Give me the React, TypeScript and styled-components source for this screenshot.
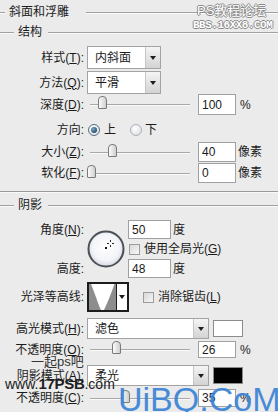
import styled, { createGlobalStyle } from "styled-components";

const GlobalStyle = createGlobalStyle`
  html, body {
    margin: 0;
    padding: 0;
    background: #ebebeb;
  }
`;

const FONT = `"Liberation Sans", "Noto Sans CJK SC", sans-serif`;

const Panel = styled.div`
  position: relative;
  width: 278px;
  height: 412px;
  overflow: hidden;
  background: #ebebeb;
  color: #1b1b1b;
  font-family: ${FONT};
  font-size: 12px;
  line-height: 14px;
`;

const HeaderRow = styled.div<{ $h: number; $mt?: number }>`
  display: flex;
  align-items: center;
  height: ${(p) => p.$h}px;
  margin-top: ${(p) => p.$mt ?? 0}px;
`;

const Rule = styled.span<{ $w?: number }>`
  height: 1px;
  background: #a0a0a0;
  box-shadow: 0 1px 0 #fafafa;
  ${(p) => (p.$w ? `width: ${p.$w}px; flex: none;` : `flex: 1;`)}
`;

const HeaderText = styled.span<{ $ml: number; $mr: number }>`
  margin: 0 ${(p) => p.$mr}px 0 ${(p) => p.$ml}px;
  white-space: nowrap;
`;

const Divider = styled.div`
  margin-top: 8px;
  height: 1px;
  background: #9a9a9a;
  box-shadow: 0 1px 0 #fafafa;
`;

const Row = styled.div<{ $mt: number; $h: number }>`
  display: flex;
  align-items: center;
  height: ${(p) => p.$h}px;
  margin-top: ${(p) => p.$mt}px;
`;

const Label = styled.span`
  width: 87px;
  flex: none;
  box-sizing: border-box;
  padding-right: 3px;
  text-align: right;
  white-space: nowrap;
  align-self: center;
`;

const Select = styled.div<{ $w: number }>`
  width: ${(p) => p.$w}px;
  height: 100%;
  box-sizing: border-box;
  display: flex;
  border: 1px solid #a3a3a3;
  background: #fff;
`;

const SelectValue = styled.span`
  flex: 1;
  padding-left: 7px;
  display: flex;
  align-items: center;
`;

const SelectButton = styled.span`
  width: 14px;
  flex: none;
  border-left: 1px solid #c6c6c6;
  background: linear-gradient(#f5f5f5, #d3d3d3);
  display: flex;
  align-items: center;
  justify-content: center;
  &::after {
    content: "";
    border-left: 3px solid transparent;
    border-right: 3px solid transparent;
    border-top: 4px solid #1e1e1e;
  }
`;

const Track = styled.div`
  position: relative;
  width: 100px;
  height: 1px;
  margin-left: 3px;
  background: #a8a8a8;
  box-shadow: 0 1px 0 #fafafa;
`;

const Thumb = styled.span`
  position: absolute;
  top: -8px;
  width: 9px;
  height: 13px;
  margin-left: -4px;
  box-sizing: border-box;
  border: 1px solid #7a7a7a;
  border-radius: 4px 4px 1px 1px;
  background: linear-gradient(90deg, #fbfbfb, #cfcfcf);
`;

const NumBox = styled.div<{ $w?: number; $ml?: number }>`
  width: ${(p) => p.$w ?? 38}px;
  height: 100%;
  margin-left: ${(p) => p.$ml ?? 8}px;
  box-sizing: border-box;
  border: 1px solid #a0a0a0;
  background: #fff;
  padding-left: 3px;
  display: flex;
  align-items: center;
`;

const Unit = styled.span<{ $ml: number }>`
  margin-left: ${(p) => p.$ml}px;
  white-space: nowrap;
`;

const Radio = styled.span<{ $on?: boolean; $ml: number }>`
  width: 12px;
  height: 12px;
  flex: none;
  margin-left: ${(p) => p.$ml}px;
  box-sizing: border-box;
  border-radius: 50%;
  border: 1px solid ${(p) => (p.$on ? "#5a6d80" : "#aab0b6")};
  background: radial-gradient(circle at 40% 35%, #ffffff, #d5dae0);
  display: flex;
  align-items: center;
  justify-content: center;
  &::after {
    content: "";
    width: 6px;
    height: 6px;
    border-radius: 50%;
    background: ${(p) =>
      p.$on ? "radial-gradient(circle at 35% 35%, #7aa8c8, #0c2c48)" : "transparent"};
  }
`;

const Check = styled.span<{ $ml: number }>`
  width: 11px;
  height: 11px;
  flex: none;
  margin-left: ${(p) => p.$ml}px;
  box-sizing: border-box;
  border: 1px solid #9c9c9c;
  background: linear-gradient(135deg, #d8d8d8, #f7f7f7);
`;

const OptionText = styled.span<{ $ml: number }>`
  margin-left: ${(p) => p.$ml}px;
  white-space: nowrap;
`;

const AngleGrid = styled.div`
  display: grid;
  grid-template-columns: 87px 41px 1fr;
  grid-template-rows: 19px 20px 19px;
  margin-top: 7px;
`;

const Cell = styled.div<{ $row: string; $col: number }>`
  grid-row: ${(p) => p.$row};
  grid-column: ${(p) => p.$col};
  display: flex;
  align-items: center;
`;

const ContourBox = styled.div`
  width: 42px;
  height: 30px;
  box-sizing: border-box;
  border: 2px solid #1c1c1c;
  background: #fff;
  display: flex;
`;

const ContourArrow = styled.span`
  flex: 1;
  border-left: 1px solid #1c1c1c;
  display: flex;
  align-items: center;
  justify-content: center;
  &::after {
    content: "";
    border-left: 3px solid transparent;
    border-right: 3px solid transparent;
    border-top: 4px solid #1c1c1c;
  }
`;

const Swatch = styled.span<{ $color: string }>`
  width: 30px;
  height: 17px;
  margin-left: 4px;
  box-sizing: border-box;
  border: 1px solid #8c8c8c;
  background: ${(p) => p.$color};
`;

const MarkForum = styled.div`
  position: absolute;
  left: 193px;
  top: 3px;
  color: #fff;
  text-shadow: 1px 0 #8a8a8a, -1px 0 #8a8a8a, 0 1px #8a8a8a, 0 -1px #8a8a8a;
  line-height: 15px;
`;

const MarkForumName = styled.div`
  padding-left: 4px;
  font-size: 13px;
`;

const MarkForumUrl = styled.div`
  font-family: "Liberation Mono", monospace;
  font-size: 11px;
  font-weight: bold;
  letter-spacing: -0.5px;
`;

const MarkPs = styled.div`
  position: absolute;
  left: 31px;
  top: 355px;
  font-size: 13px;
  color: #353535;
`;

const MarkPsUrl = styled.div`
  position: absolute;
  left: 5px;
  top: 375px;
  color: #202020;
  font-family: "Liberation Sans", sans-serif;
  font-size: 14px;
  line-height: 18px;
  white-space: nowrap;
  b {
    font-size: 15px;
    letter-spacing: -0.3px;
  }
`;

const MarkBig = styled.div`
  position: absolute;
  left: 118px;
  top: 382px;
  font-family: "Liberation Sans", sans-serif;
  font-size: 34px;
  line-height: 34px;
  color: #3a83d6;
  opacity: 0.92;
  white-space: nowrap;
`;

const Slider: React.FC<{ pct: number }> = ({ pct }) => (
  <Track>
    <Thumb style={{ left: `${pct}%` }} />
  </Track>
);

const Dial = () => (
  <svg width="38" height="38" viewBox="0 0 38 38">
    <defs>
      <radialGradient id="dialFill" cx="50%" cy="45%" r="55%">
        <stop offset="0%" stopColor="#ffffff" />
        <stop offset="70%" stopColor="#f3f4f9" />
        <stop offset="100%" stopColor="#d6d9e2" />
      </radialGradient>
    </defs>
    <circle cx="19" cy="19" r="17.5" fill="url(#dialFill)" stroke="#4b5057" strokeWidth="2" />
    <rect x="18" y="17" width="2" height="2" fill="#111" />
    <g stroke="#2a2a2a" strokeWidth="1">
      <line x1="23.5" y1="10" x2="23.5" y2="12" />
      <line x1="23.5" y1="15" x2="23.5" y2="17" />
      <line x1="20" y1="13.5" x2="22" y2="13.5" />
      <line x1="25" y1="13.5" x2="27" y2="13.5" />
    </g>
  </svg>
);

const ContourPreview = () => (
  <svg width="27" height="26" viewBox="0 0 27 26">
    <rect width="27" height="26" fill="#8d8d8d" />
    <path d="M2 0 C 6 10, 10 22, 12 26 L 15 26 C 18 20, 22 10, 25.5 0 Z" fill="#fff" />
  </svg>
);

export default function App() {
  return (
    <>
      <GlobalStyle />
      <Panel>
        <HeaderRow $h={24}>
          <Rule $w={5} />
          <HeaderText $ml={4} $mr={17}>斜面和浮雕</HeaderText>
          <Rule />
        </HeaderRow>
        <HeaderRow $h={16}>
          <Rule $w={14} />
          <HeaderText $ml={4} $mr={6}>结构</HeaderText>
          <Rule />
        </HeaderRow>

        <Row $mt={6} $h={23}>
          <Label>样式(<u>T</u>):</Label>
          <Select $w={74}>
            <SelectValue>内斜面</SelectValue>
            <SelectButton />
          </Select>
        </Row>
        <Row $mt={2} $h={23}>
          <Label>方法(<u>Q</u>):</Label>
          <Select $w={74}>
            <SelectValue>平滑</SelectValue>
            <SelectButton />
          </Select>
        </Row>
        <Row $mt={0} $h={21}>
          <Label>深度(<u>D</u>):</Label>
          <Slider pct={12} />
          <NumBox>100</NumBox>
          <Unit $ml={4}>%</Unit>
        </Row>
        <Row $mt={7} $h={16}>
          <Label>方向:</Label>
          <Radio $on $ml={1} />
          <OptionText $ml={4}>上</OptionText>
          <Radio $ml={14} />
          <OptionText $ml={3}>下</OptionText>
        </Row>
        <Row $mt={4} $h={20}>
          <Label>大小(<u>Z</u>):</Label>
          <Slider pct={22} />
          <NumBox>40</NumBox>
          <Unit $ml={2}>像素</Unit>
        </Row>
        <Row $mt={1} $h={20}>
          <Label>软化(<u>F</u>):</Label>
          <Slider pct={1} />
          <NumBox>0</NumBox>
          <Unit $ml={2}>像素</Unit>
        </Row>

        <Divider />

        <HeaderRow $h={16} $mt={5}>
          <Rule $w={14} />
          <HeaderText $ml={4} $mr={6}>阴影</HeaderText>
          <Rule />
        </HeaderRow>

        <AngleGrid>
          <Cell $row="1" $col={1}>
            <Label>角度(<u>N</u>):</Label>
          </Cell>
          <Cell $row="1 / 4" $col={2}>
            <Dial />
          </Cell>
          <Cell $row="1" $col={3}>
            <NumBox $w={43} $ml={0}>50</NumBox>
            <Unit $ml={2}>度</Unit>
          </Cell>
          <Cell $row="2" $col={3}>
            <Check $ml={1} />
            <OptionText $ml={4}>使用全局光(<u>G</u>)</OptionText>
          </Cell>
          <Cell $row="3" $col={1}>
            <Label>高度:</Label>
          </Cell>
          <Cell $row="3" $col={3}>
            <NumBox $w={43} $ml={0}>48</NumBox>
            <Unit $ml={2}>度</Unit>
          </Cell>
        </AngleGrid>

        <Row $mt={4} $h={30}>
          <Label>光泽等高线:</Label>
          <ContourBox>
            <ContourPreview />
            <ContourArrow />
          </ContourBox>
          <Check $ml={14} />
          <OptionText $ml={4}>消除锯齿(<u>L</u>)</OptionText>
        </Row>
        <Row $mt={6} $h={21}>
          <Label>高光模式(<u>H</u>):</Label>
          <Select $w={122}>
            <SelectValue>滤色</SelectValue>
            <SelectButton />
          </Select>
          <Swatch $color="#fff" />
        </Row>
        <Row $mt={2} $h={17}>
          <Label>不透明度(<u>O</u>):</Label>
          <Slider pct={26} />
          <NumBox>26</NumBox>
          <Unit $ml={4}>%</Unit>
        </Row>
        <Row $mt={7} $h={21}>
          <Label>阴影模式(<u>A</u>):</Label>
          <Select $w={122}>
            <SelectValue>柔光</SelectValue>
            <SelectButton />
          </Select>
          <Swatch $color="#000" />
        </Row>
        <Row $mt={3} $h={18}>
          <Label>不透明度(<u>C</u>):</Label>
          <Slider pct={35} />
          <NumBox>35</NumBox>
          <Unit $ml={4}>%</Unit>
        </Row>

        <MarkForum>
          <MarkForumName>PS教程论坛</MarkForumName>
          <MarkForumUrl>BBS.16XX8.COM</MarkForumUrl>
        </MarkForum>
        <MarkPs>一起ps吧</MarkPs>
        <MarkPsUrl>
          www.<b>17PSB</b>.com
        </MarkPsUrl>
        <MarkBig>UiBQ.CoM</MarkBig>
      </Panel>
    </>
  );
}
